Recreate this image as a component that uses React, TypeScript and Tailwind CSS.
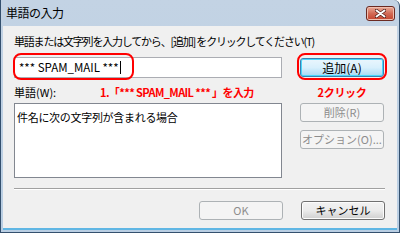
import React from "react";

const jp = { fontFamily: '"Noto Sans CJK JP", "Noto Sans", sans-serif' };

function Btn({ children, kind = "normal", className = "" }: { children: React.ReactNode; kind?: "normal" | "default" | "disabled"; className?: string }) {
  const look =
    kind === "disabled"
      ? "border-[#adb2b5] bg-[#f4f4f4] text-[#8d8d8d]"
      : kind === "default"
      ? "border-[#3c7fb1] bg-gradient-to-b from-[#eaf6fd] via-[#d9f0fc] to-[#a7d9f5] text-black shadow-[inset_0_0_0_1px_#48d8fb]"
      : "border-[#707070] bg-gradient-to-b from-[#f2f2f2] via-[#ebebeb] to-[#cfcfcf] text-black shadow-[inset_0_0_0_1px_#fcfcfc]";
  return (
    <div className={`w-[84px] h-[19px] rounded-[3px] border flex items-center justify-center text-[11px] leading-none ${look} ${className}`}>
      {children}
    </div>
  );
}

export default function App() {
  return (
    <div className="w-[400px] h-[233px] overflow-hidden bg-white" style={jp}>
      <div className="w-full h-full flex flex-col rounded-tr-[6px] border-x border-b border-[#34506e] bg-gradient-to-b from-[#c3d3e4] to-[#b9cee3]">
        {/* title bar */}
        <div className="h-[26px] flex items-center justify-between pl-[5px] pr-[4px]">
          <span className="text-[12px] text-black leading-none tracking-[-0.5px]">単語の入力</span>
          <div className="w-[29px] h-[15px] rounded-[3px] border border-[#6b2a22] bg-gradient-to-b from-[#e9aa98] via-[#d26a55] to-[#c4432d] flex items-center justify-center shadow-[inset_0_0_0_1px_#f0c0b0]">
            <svg width="11" height="9" viewBox="0 0 11 9">
              <path d="M1.5 1.5 L9.5 7.5 M9.5 1.5 L1.5 7.5" stroke="#4a1a14" strokeWidth="3.4" strokeLinecap="round" />
              <path d="M1.5 1.5 L9.5 7.5 M9.5 1.5 L1.5 7.5" stroke="#ffffff" strokeWidth="2" strokeLinecap="round" />
            </svg>
          </div>
        </div>

        {/* client area */}
        <div className="relative flex-1 mx-[2px] mb-[2px] bg-[#f0f0f0] border-b-2 border-[#5fb6e4] pl-[11px] pr-[12px] pt-[8px] flex flex-col text-[11px] text-black">
          <p className="h-[14px] leading-[14px] tracking-[-1.2px] whitespace-nowrap">単語または文字列を入力してから、[追加] をクリックしてください(T)</p>

          <div className="mt-[9px] flex items-center gap-[18px]">
            <div className="w-[268px] h-[21px] bg-white border border-[#abadb3] flex items-center pl-[4px] text-[11.5px]">
              <span>*** SPAM_MAIL ***</span>
              <span className="ml-[1px] w-px h-[13px] bg-black" />
            </div>
            <Btn kind="default" className="text-[12px]">追加(A)</Btn>
          </div>

          <div className="mt-[7px] h-[14px] flex gap-[18px] leading-[14px]">
            <div className="w-[268px] flex">
              <span className="w-[86px]">単語(W):</span>
              <span className="font-bold text-[#ff0000] tracking-[-0.6px] whitespace-nowrap">1.「*** SPAM_MAIL *** 」を入力</span>
            </div>
            <div className="w-[84px] text-center font-bold text-[#ff0000] tracking-[-0.3px]">2クリック</div>
          </div>

          <div className="mt-[4px] flex gap-[18px]">
            <div className="w-[268px] h-[75px] bg-white border border-[#828790] pl-[2px] pt-[6px] leading-[14px] tracking-[-0.3px]">件名に次の文字列が含まれる場合</div>
            <div className="flex flex-col gap-[8px]">
              <Btn kind="disabled">削除(R)</Btn>
              <Btn kind="disabled">オプション(O)...</Btn>
            </div>
          </div>

          <div className="mt-[10px] h-[2px] border-t border-[#a0a0a0] border-b border-b-white" />

          <div className="mt-[11px] flex justify-end gap-[18px]">
            <Btn kind="disabled">OK</Btn>
            <Btn>キャンセル</Btn>
          </div>

          {/* red annotation frames */}
          <div className="absolute left-[10px] top-[27px] w-[121px] h-[27px] rounded-[8px] border-2 border-[#ff0000]" />
          <div className="absolute left-[294px] top-[27px] w-[90px] h-[27px] rounded-[8px] border-2 border-[#ff0000]" />
        </div>
      </div>
    </div>
  );
}
